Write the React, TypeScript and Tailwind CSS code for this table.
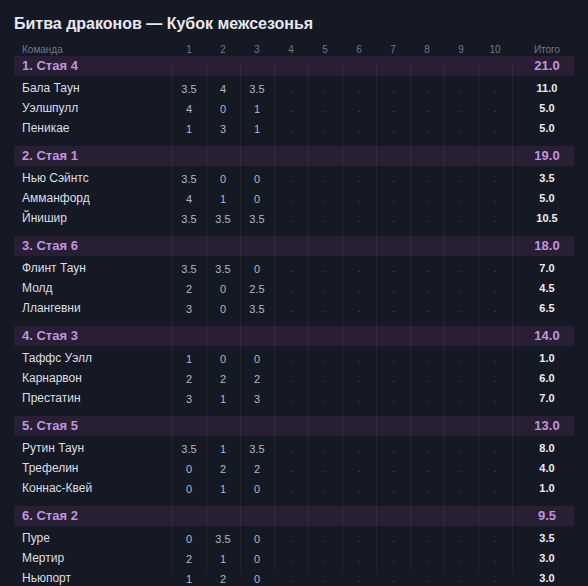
import React from "react";

type Team = { name: string; s: string[]; total: string };
type Group = { label: string; total: string; teams: Team[] };

const groups: Group[] = [
  { label: "1. Стая 4", total: "21.0", teams: [
    { name: "Бала Таун", s: ["3.5", "4", "3.5"], total: "11.0" },
    { name: "Уэлшпулл", s: ["4", "0", "1"], total: "5.0" },
    { name: "Пеникае", s: ["1", "3", "1"], total: "5.0" },
  ] },
  { label: "2. Стая 1", total: "19.0", teams: [
    { name: "Нью Сэйнтс", s: ["3.5", "0", "0"], total: "3.5" },
    { name: "Амманфорд", s: ["4", "1", "0"], total: "5.0" },
    { name: "Йнишир", s: ["3.5", "3.5", "3.5"], total: "10.5" },
  ] },
  { label: "3. Стая 6", total: "18.0", teams: [
    { name: "Флинт Таун", s: ["3.5", "3.5", "0"], total: "7.0" },
    { name: "Молд", s: ["2", "0", "2.5"], total: "4.5" },
    { name: "Ллангевни", s: ["3", "0", "3.5"], total: "6.5" },
  ] },
  { label: "4. Стая 3", total: "14.0", teams: [
    { name: "Таффс Уэлл", s: ["1", "0", "0"], total: "1.0" },
    { name: "Карнарвон", s: ["2", "2", "2"], total: "6.0" },
    { name: "Престатин", s: ["3", "1", "3"], total: "7.0" },
  ] },
  { label: "5. Стая 5", total: "13.0", teams: [
    { name: "Рутин Таун", s: ["3.5", "1", "3.5"], total: "8.0" },
    { name: "Трефелин", s: ["0", "2", "2"], total: "4.0" },
    { name: "Коннас-Квей", s: ["0", "1", "0"], total: "1.0" },
  ] },
  { label: "6. Стая 2", total: "9.5", teams: [
    { name: "Пуре", s: ["0", "3.5", "0"], total: "3.5" },
    { name: "Мертир", s: ["2", "1", "0"], total: "3.0" },
    { name: "Ньюпорт", s: ["1", "2", "0"], total: "3.0" },
  ] },
];

const cols = "grid grid-cols-[158px_repeat(10,34px)_62px]";
const rounds = ["1", "2", "3", "4", "5", "6", "7", "8", "9", "10"];
const lineOffsets = Array.from({ length: 11 }, (_, i) => 158 + i * 34);

export default function App() {
  return (
    <div
      className="min-h-screen bg-[#151924] px-[14px] pt-[12px]"
      style={{ fontFamily: '"Liberation Sans", Arial, sans-serif' }}
    >
      <h1 className="text-[16px] leading-[24px] font-bold text-[#e6e8ee]">
        Битва драконов — Кубок межсезонья
      </h1>
      <div className={`${cols} mt-[8px] h-[12px] items-center text-[10px] leading-[12px] text-[#737787]`}>
        <div className="pl-2">Команда</div>
        {rounds.map((r) => (
          <div key={r} className="text-center">{r}</div>
        ))}
        <div className="pl-2 text-center">Итого</div>
      </div>
      <div className="relative">
        {lineOffsets.map((l) => (
          <div
            key={l}
            className="absolute top-[6px] h-[510px] w-px bg-[#ffffff0d]"
            style={{ left: l }}
          />
        ))}
        {groups.map((g) => (
          <div key={g.label} className="mb-[10px]">
            <div className={`${cols} h-[20px] items-center bg-[#281f35]`}>
              <div className="pl-2 text-[13px] font-bold text-[#c194de]">{g.label}</div>
              {rounds.map((r) => (
                <div key={r} />
              ))}
              <div className="pl-2 text-center text-[13px] font-bold text-[#c194de]">{g.total}</div>
            </div>
            <div>
              {g.teams.map((t) => (
                <div key={t.name} className={`${cols} h-[20px] items-center`}>
                  <div className="pl-2 text-[12px] text-[#dcdee5]">{t.name}</div>
                  {rounds.map((r, i) => (
                    <div key={r} className="text-center">
                      {i < 3 ? (
                        <span className="text-[11px] text-[#b3b7c3]">{t.s[i]}</span>
                      ) : (
                        <span className="text-[8px] text-[#4a4e5c]">-</span>
                      )}
                    </div>
                  ))}
                  <div className="pl-2 text-center text-[11px] font-bold text-[#eceef3]">{t.total}</div>
                </div>
              ))}
            </div>
          </div>
        ))}
      </div>
    </div>
  );
}
